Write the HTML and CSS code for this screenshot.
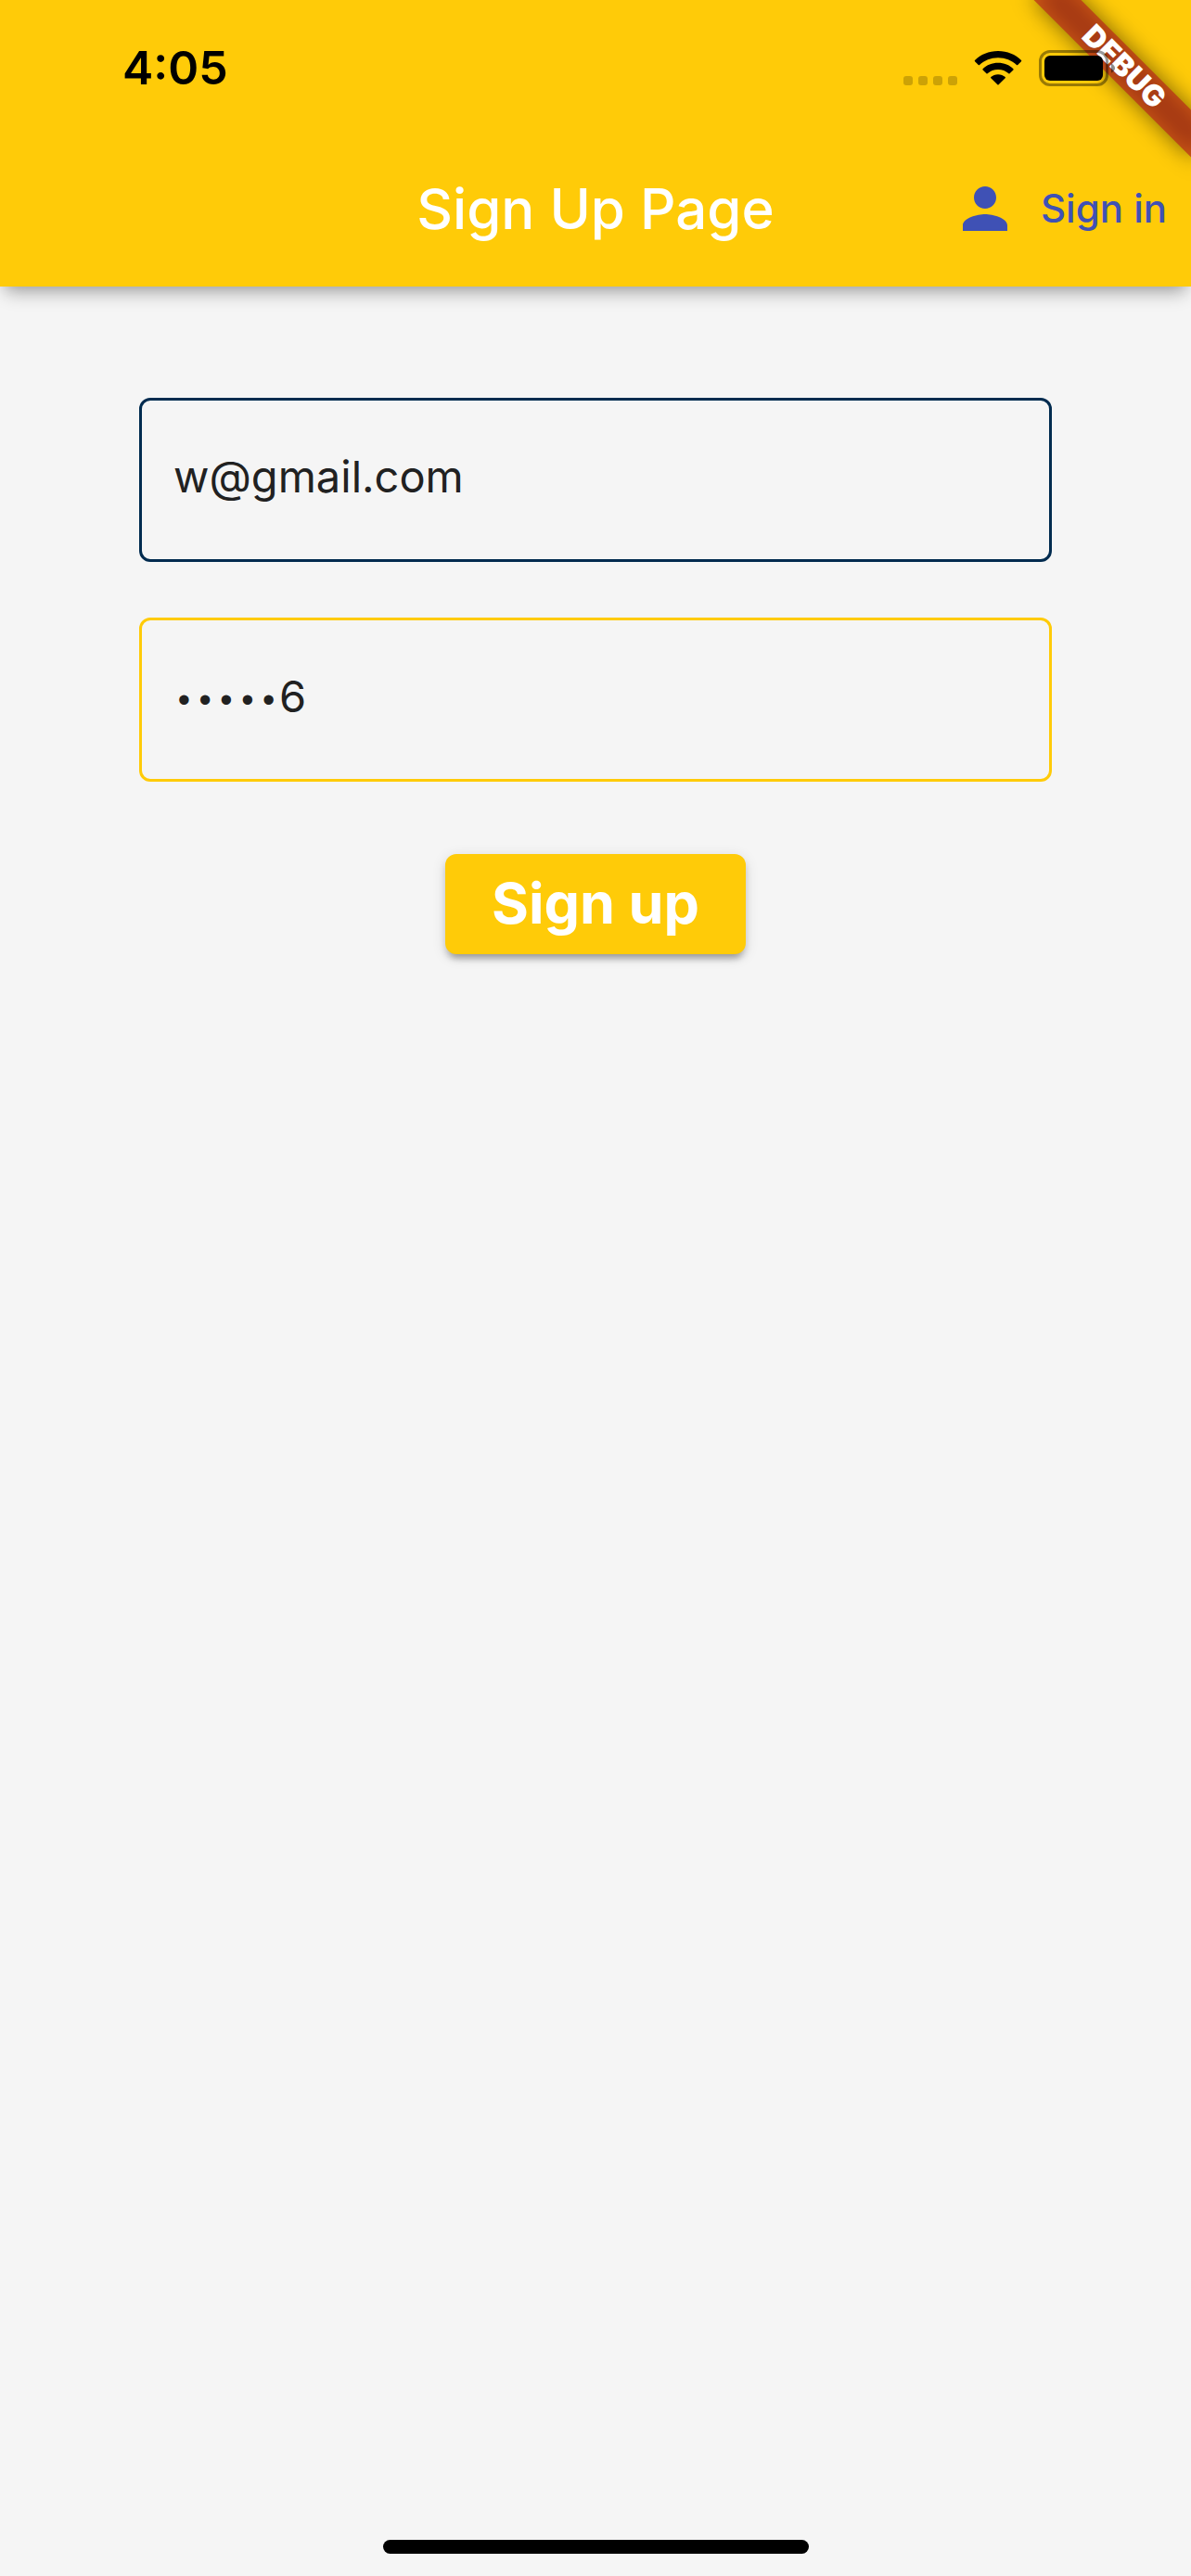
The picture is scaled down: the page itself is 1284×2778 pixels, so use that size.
FILE: index.html
```html
<!DOCTYPE html>
<html lang="en">
<head>
<meta charset="utf-8">
<meta name="viewport" content="width=device-width, initial-scale=1">
<title>Sign Up Page</title>
<link rel="stylesheet" href="styles.css">
</head>
<body>
<div class="app">
  <header class="header">
    <div class="debug" aria-hidden="true"><div class="ribbon"><span class="ribbon-label">DEBUG</span></div></div>
    <div class="status">
      <time class="clock">4:05</time>
      <div class="status-icons">
        <svg class="signal" width="58" height="40" viewBox="0 0 58 40" fill="#000" fill-opacity=".2" aria-hidden="true">
          <rect x="0" y="29" width="10" height="10" rx="3"/><rect x="16" y="29" width="10" height="10" rx="3"/><rect x="32" y="29" width="10" height="10" rx="3"/><rect x="48" y="29" width="10" height="10" rx="3"/>
        </svg>
        <svg class="wifi" width="52" height="40" viewBox="0 0 52 40" aria-hidden="true">
          <path d="M26 2C36 2 44.800 5.800 51 12Q51.600 12.600 51 13.200L47.200 17Q46.600 17.500 46 17C40.800 12.100 33.800 9.200 26 9.200S11.200 12.100 6 17Q5.400 17.500 4.800 17L1 13.200Q.4 12.600 1 12C7.200 5.800 16 2 26 2Z"/>
          <path d="M26 14.800C32.500 14.800 38.200 17.200 42.400 21.200Q43 21.800 42.400 22.400L38.500 26.200Q38 26.700 37.400 26.200C34.300 23.500 30.400 22 26 22S17.700 23.500 14.600 26.200Q14 26.700 13.500 26.200L9.600 22.400Q9 21.800 9.600 21.200C13.800 17.200 19.500 14.800 26 14.800Z"/>
          <path d="M26 27.200C29 27.200 31.700 28.300 33.700 30Q34.200 30.600 33.700 31.200L26.600 38.300Q26 38.900 25.400 38.300L18.300 31.200Q17.800 30.600 18.300 30C20.300 28.300 23 27.200 26 27.200Z"/>
        </svg>
        <svg class="battery" width="83" height="40" viewBox="0 0 83 40" aria-hidden="true">
          <rect x="1.500" y="2.500" width="72" height="36" rx="10.500" fill="none" stroke="#000" stroke-opacity=".4" stroke-width="3"/>
          <rect x="6" y="7" width="63" height="27" rx="6"/>
          <path d="M78 15.500Q82 17.500 82 20.500T78 25.500Z" fill-opacity=".45"/>
        </svg>
      </div>
    </div>
    <div class="appbar">
      <h1 class="title">Sign Up Page</h1>
      <a class="signin" href="#signin">
        <svg width="72" height="72" viewBox="0 0 24 24" fill="currentColor" aria-hidden="true"><path d="M12 12c2.210 0 4-1.790 4-4s-1.790-4-4-4-4 1.790-4 4 1.790 4 4 4zm0 2c-2.670 0-8 1.340-8 4v2h16v-2c0-2.660-5.330-4-8-4z"/></svg>
        <span>Sign in</span>
      </a>
    </div>
  </header>
  <main class="main">
    <form class="form">
      <label class="field"><input class="input" type="email" name="email" aria-label="Email" value="w@gmail.com"></label>
      <label class="field field-active"><span class="mask">•••••</span><input class="input" type="text" name="password" aria-label="Password" autocomplete="off" value="6"></label>
      <button class="submit" type="button">Sign up</button>
    </form>
  </main>
  <footer class="footer"><div class="home-bar"></div></footer>
</div>
</body>
</html>
```
FILE: styles.css
```css
*{box-sizing:border-box}
body{margin:0;background:#f5f5f5;font-family:Inter,"Liberation Sans",sans-serif;color:#212121}
.app{display:flex;flex-direction:column;min-height:100vh}
.header{position:relative;background:#ffcb08;box-shadow:0 12px 18px -6px rgba(0,0,0,.32),0 3px 12px -3px rgba(0,0,0,.08)}
.status{position:relative;display:flex;justify-content:space-between;align-items:center;height:141px;padding:4px 81px 0 132px}
.clock{font-size:50px;font-weight:600;line-height:60px;color:#000}
.status-icons{display:flex;align-items:center}
.status-icons svg{display:block}
.wifi{margin:0 18px}
.appbar{display:grid;grid-template-columns:1fr auto 1fr;align-items:center;height:168px;padding:0 26px}
.title{grid-column:2;margin:0;font-size:60px;font-weight:500;line-height:72px;color:#fff}
.signin{justify-self:end;display:flex;align-items:center;gap:24px;font-size:42px;font-weight:500;line-height:48px;color:#3f51b5;text-decoration:none}
.signin svg{display:block}

/* Corner ribbon, drawn under the status icons */
.debug{position:absolute;top:0;right:0;width:240px;height:240px;overflow:hidden}
.ribbon{position:absolute;top:54px;right:-48px;width:240px;height:36px;transform:rotate(45deg);text-align:center}
.ribbon::before,.ribbon::after{content:"";position:absolute;inset:0}
.ribbon::before{background:rgba(0,0,0,.5);filter:blur(12px)}
.ribbon::after{background:rgba(183,28,28,.63)}
.ribbon-label{position:relative;z-index:1;font-size:32px;font-weight:900;line-height:36px;color:#fff}

.main{flex:1;padding:120px 150px}
.form{display:flex;flex-direction:column;align-items:center;gap:60px}
.field{display:flex;align-items:baseline;width:100%;height:177px;padding:53px 34px 0;border:3px solid #002b4f;border-radius:12px}
.field-active{border-color:#ffcb08}
.mask{font-family:"Liberation Mono",monospace;font-size:38px;line-height:38px}
.input{flex:1;min-width:0;height:58px;padding:0;border:0;background:transparent;font:400 47px/58px Inter,"Liberation Sans",sans-serif;color:#212121;outline:0}
.submit{min-width:324px;height:108px;margin-top:18px;padding:0 48px 2px;border:0;border-radius:12px;background:#ffcb08;box-shadow:0 9px 6px -6px rgba(0,0,0,.2),0 6px 6px rgba(0,0,0,.14),0 3px 15px rgba(0,0,0,.12);font:700 61px/72px Inter,"Liberation Sans",sans-serif;color:#fff}
.footer{display:flex;justify-content:center;padding-bottom:24px}
.home-bar{width:459px;height:15px;border-radius:8px;background:#000}
```
